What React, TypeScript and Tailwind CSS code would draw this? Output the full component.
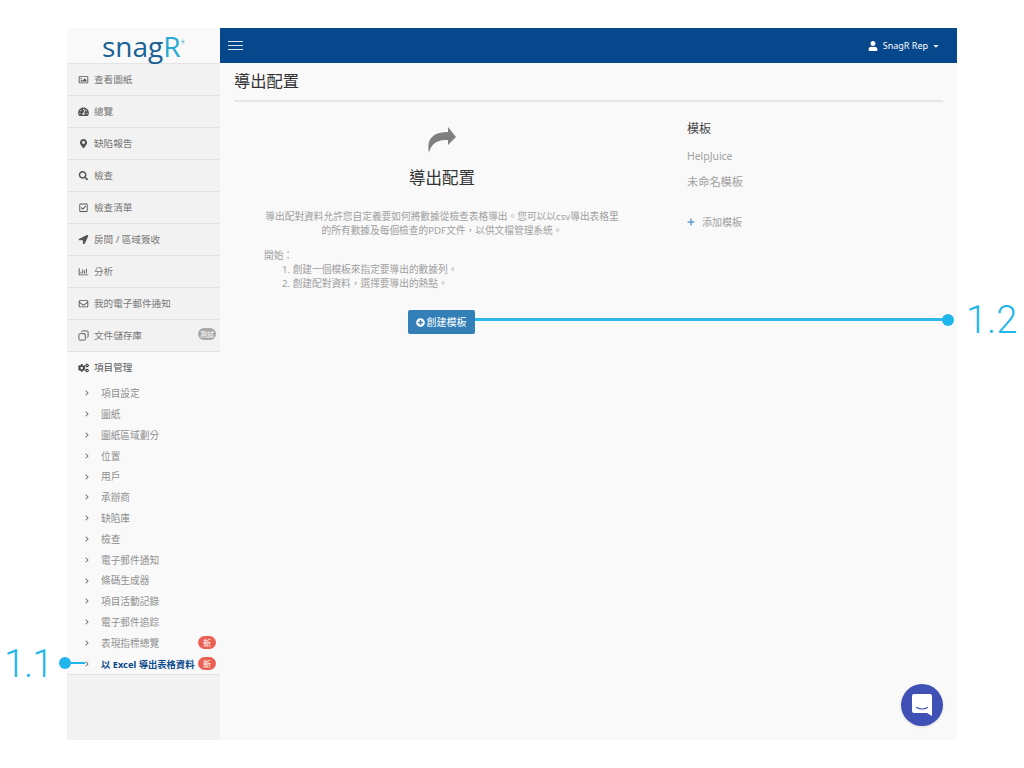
import {
  FaRegImage, FaTachometerAlt, FaMapMarkerAlt, FaSearch, FaRegCheckSquare, FaLocationArrow,
  FaRegChartBar, FaRegEnvelope, FaCogs, FaPlusCircle, FaPlus, FaUser, FaCaretDown, FaChevronRight,
} from 'react-icons/fa';
import { Copy } from 'lucide-react';

const font = { fontFamily: '"Noto Sans", "Noto Sans CJK TC", sans-serif' };

const MirroredCopy = ({ className }: { className?: string }) => (
  <Copy size={11} strokeWidth={2} className={`-scale-x-100 ${className ?? ''}`} />
);

const menu = [
  { icon: FaRegImage, label: '查看圖紙' },
  { icon: FaTachometerAlt, label: '總覽' },
  { icon: FaMapMarkerAlt, label: '缺陷報告' },
  { icon: FaSearch, label: '檢查' },
  { icon: FaRegCheckSquare, label: '檢查清單' },
  { icon: FaLocationArrow, label: '房間 / 區域簽收' },
  { icon: FaRegChartBar, label: '分析' },
  { icon: FaRegEnvelope, label: '我的電子郵件通知' },
  { icon: MirroredCopy, label: '文件儲存庫', beta: true },
];

const subMenu = [
  '項目設定', '圖紙', '圖紙區域劃分', '位置', '用戶', '承辦商', '缺陷庫', '檢查',
  '電子郵件通知', '條碼生成器', '項目活動記錄', '電子郵件追踪',
];

function NewBadge() {
  return (
    <span className="ml-auto mr-[4px] flex h-[13px] w-[18px] items-center justify-center rounded-full bg-[#ea6153] text-[8px] leading-none text-white">
      新
    </span>
  );
}

function SubRow({ label, active, badge }: { label: string; active?: boolean; badge?: boolean }) {
  return (
    <div className="flex h-[20.8px] items-center pl-[12px]">
      <FaChevronRight className="w-[16px] shrink-0 text-[6px] text-[#777]" />
      <span className={`ml-[6px] whitespace-nowrap pt-[2px] ${active ? 'text-[9.3px] font-bold text-[#0b4a8b]' : 'text-[9.7px] text-[#8f8f8f]'}`}>
        {label}
      </span>
      {badge && <NewBadge />}
    </div>
  );
}

function Sidebar() {
  return (
    <aside className="flex w-[153px] shrink-0 flex-col bg-[#f2f2f2]">
      <div className="flex h-[36px] items-center justify-center border-b border-[#e4e4e4] bg-[#f9f9f9]">
        <span className="text-[28px] font-medium leading-none text-[#1a6195]" style={{ fontFamily: '"Open Sans", sans-serif' }}>
          snag<span className="font-normal text-[#27a9d6]">R</span>
        </span>
        <span className="mb-[8px] text-[8px] leading-none text-[#27a9d6]">+</span>
      </div>
      {menu.map(item => {
        const Icon = item.icon;
        return (
          <div key={item.label} className="flex h-[32px] items-center border-b border-[#e2e2e2] pl-[11px]">
            <Icon className="w-[11px] text-[9.5px] text-[#555]" />
            <span className="ml-[5px] pt-[2px] text-[9.6px] text-[#777]">{item.label}</span>
            {item.beta && (
              <span className="mb-[3px] ml-auto mr-[4px] flex h-[12px] w-[18px] items-center justify-center rounded-full bg-[#a8a8a8] text-[7px] leading-none text-white">
                測試
              </span>
            )}
          </div>
        );
      })}
      <div className="border-b border-[#e2e2e2] bg-[#f9f9f9]">
        <div className="flex h-[31px] items-center pl-[11px]">
          <FaCogs className="w-[11px] text-[10px] text-[#444]" />
          <span className="ml-[5px] pt-[2px] text-[9.6px] text-[#555]">項目管理</span>
        </div>
        {subMenu.map(label => (
          <SubRow key={label} label={label} />
        ))}
        <SubRow label="表現指標總覽" badge />
        <SubRow label="以 Excel 導出表格資料" active badge />
      </div>
    </aside>
  );
}

function Content() {
  return (
    <main className="relative flex flex-1 flex-col bg-[#f9f9f9]">
      <header className="flex h-[35px] items-center justify-between bg-[#07478c] pl-[8px] pr-[17px] text-white">
        <div className="flex w-[15px] flex-col gap-[2.5px]">
          <div className="h-[1.5px] bg-[#dbe6f2]" />
          <div className="h-[1.5px] bg-[#dbe6f2]" />
          <div className="h-[1.5px] bg-[#dbe6f2]" />
        </div>
        <div className="flex items-center text-[9px]">
          <FaUser className="mr-[5px] text-[10px]" />
          SnagR Rep
          <FaCaretDown className="ml-[4px] text-[8px]" />
        </div>
      </header>

      <div className="px-[14px]">
        <h1 className="flex h-[39px] items-center border-b-2 border-[#e6e6e6] text-[16.3px] text-[#333]">導出配置</h1>

        <div className="flex">
          <div className="w-[416px] shrink-0 px-[30px]">
            <div className="flex flex-col items-center pt-[25px]">
              <svg width="28" height="26" viewBox="0 0 28 26" className="-ml-[1px]">
                <path d="M20 0 L28 10 L20 18 V13 C12 13 4 14 1 26 C-2 12 5 5 20 5 Z" fill="#7f7f7f" />
              </svg>
              <h2 className="mt-[13px] text-[16.5px] leading-[24px] text-[#333]">導出配置</h2>
            </div>
            <p className="mt-[20px] whitespace-nowrap text-center text-[9.7px] leading-[14px] text-[#a0a0a0]">
              導出配對資料允許您自定義要如何將數據從檢查表格導出。您可以以csv導出表格里
              <br />
              的所有數據及每個檢查的PDF文件，以供文檔管理系統。
            </p>
            <p className="mt-[11px] text-[9.7px] leading-[14px] text-[#a0a0a0]">開始：</p>
            <ol className="pl-[18px] text-[9.7px] leading-[14px] text-[#a0a0a0]">
              <li>1. 創建一個模板來指定要導出的數據列。</li>
              <li>2. 創建配對資料，選擇要導出的熱點。</li>
            </ol>
            <div className="mt-[19px] flex justify-center">
              <button className="mr-[2px] flex h-[24px] w-[67px] items-center justify-center rounded-[2px] bg-[#337fb7] text-[10px] text-white">
                <FaPlusCircle className="mr-[2px] text-[9px]" />
                創建模板
              </button>
            </div>
          </div>

          <div className="pl-[37px] pt-[17px]">
            <h3 className="text-[12px] leading-[20px] text-[#444]">模板</h3>
            <p className="mt-[10px] text-[10.4px] leading-[14px] text-[#a0a0a0]">HelpJuice</p>
            <p className="mt-[11px] text-[11.2px] leading-[16px] text-[#a0a0a0]">未命名模板</p>
            <div className="mt-[25px] flex items-center text-[10px] leading-[14px] text-[#a0a0a0]">
              <FaPlus className="mr-[7px] text-[8px] text-[#5b9bd1]" />
              添加模板
            </div>
          </div>
        </div>
      </div>

      <div className="absolute bottom-[14px] right-[14px] flex h-[42px] w-[42px] items-center justify-center rounded-full bg-[#3f51b5] shadow-sm">
        <svg width="20" height="22" viewBox="0 0 20 22">
          <path d="M2 0h16a2 2 0 0 1 2 2v20l-5-3H2a2 2 0 0 1-2-2V2a2 2 0 0 1 2-2z" fill="#fff" />
          <path d="M4.5 13.5c3 2 8 2 11 0" fill="none" stroke="#3f51b5" strokeWidth="1.2" strokeLinecap="round" />
        </svg>
      </div>
    </main>
  );
}

export default function App() {
  return (
    <div className="relative h-[768px] w-[1024px] overflow-hidden bg-white pl-[67px] pt-[28px]" style={font}>
      <div className="flex h-[712px] w-[890px]">
        <Sidebar />
        <Content />
      </div>

      {/* Callouts */}
      <div className="absolute left-[4px] top-[642px] text-[38px] font-light leading-[44px] tracking-[-1px] text-[#1fb6ee]" style={{ fontFamily: 'Roboto, sans-serif' }}>1.1</div>
      <div className="absolute left-[59px] top-[657px] h-[12px] w-[12px] rounded-full bg-[#1fb6ee]" />
      <div className="absolute left-[65px] top-[662px] h-[2px] w-[20px] bg-[#1fb6ee]" />

      <div className="absolute left-[475px] top-[318px] h-[3px] w-[470px] bg-[#2bb8ea]" />
      <div className="absolute left-[942px] top-[314px] h-[12px] w-[12px] rounded-full bg-[#1fb6ee]" />
      <div className="absolute left-[966px] top-[298px] text-[38px] font-light leading-[44px] text-[#1fb6ee]" style={{ fontFamily: 'Roboto, sans-serif' }}>1.2</div>
    </div>
  );
}
